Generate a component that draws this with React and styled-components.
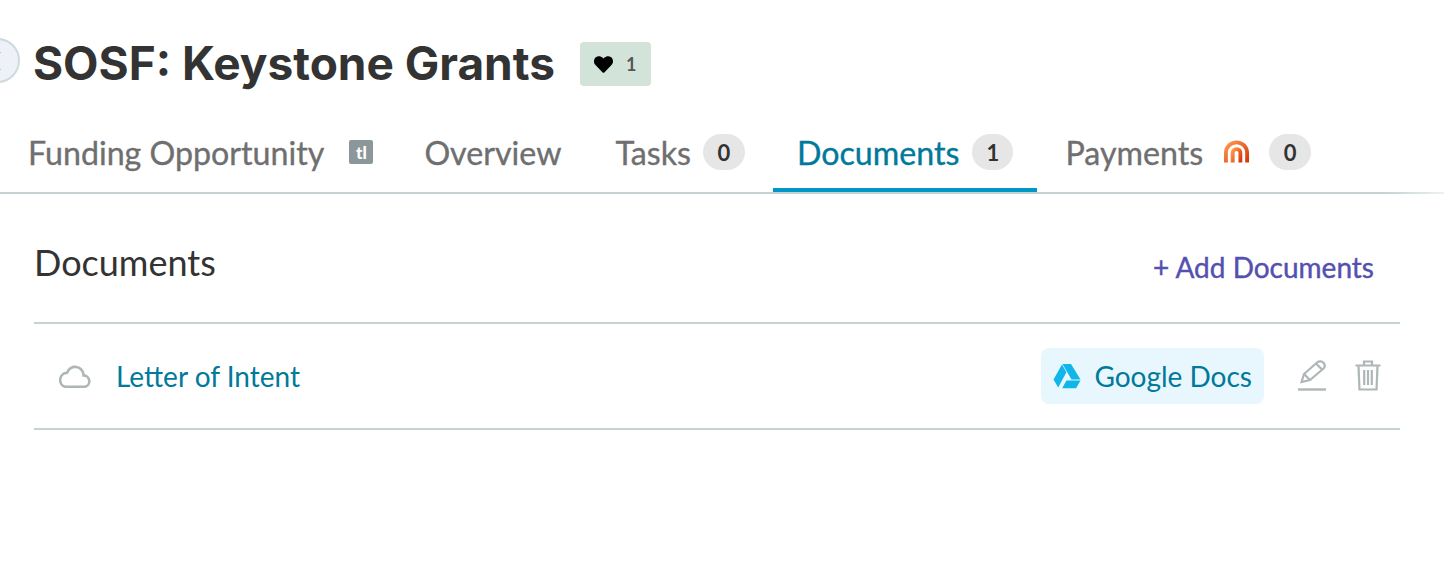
import React from "react";
import styled, { createGlobalStyle } from "styled-components";
import { FaHeart } from "react-icons/fa";

const GlobalStyle = createGlobalStyle`
  html, body {
    margin: 0;
    background: #fff;
    font-family: Lato, "Liberation Sans", sans-serif;
    overflow: hidden;
  }
`;

const Page = styled.div`
  position: relative;
  width: 1444px;
  height: 586px;
  overflow: hidden;
`;

const BackButton = styled.div`
  position: absolute;
  left: -25px;
  top: 38px;
  width: 45px;
  height: 45px;
  box-sizing: border-box;
  border: 2px solid #cddbde;
  border-radius: 50%;
  background: #eff1f8;
  display: flex;
  align-items: center;
  justify-content: flex-end;
  padding-right: 17px;
`;

const Header = styled.header`
  display: flex;
  align-items: center;
  gap: 25px;
  height: 128px;
  padding: 0 0 2px 33px;
  box-sizing: border-box;
`;

const Title = styled.h1`
  margin: 0;
  font-family: Inter, Lato, sans-serif;
  font-size: 46px;
  font-weight: 700;
  color: #333;
`;

const LikeBadge = styled.div`
  display: flex;
  align-items: center;
  gap: 13px;
  height: 44px;
  margin-top: 2px;
  padding: 0 15px 0 14px;
  border-radius: 4px;
  background: #d2e4d9;
  color: #555;
  font-size: 18px;
  font-weight: 700;
`;

const TabBar = styled.nav`
  display: flex;
  gap: 4px;
  height: 66px;
  padding-left: 4px;
  box-sizing: border-box;
  border-bottom: 2px solid;
  border-image: linear-gradient(90deg, #c6d3d5 96%, #eef1f2) 1;
`;

const Tab = styled.div`
  display: flex;
  align-items: center;
  height: 64px;
  margin-right: ${({ $after }) => $after || 0}px;
  padding: ${({ $active }) => ($active ? "4px" : "0")} 24px 16px 24px;
  box-sizing: border-box;
  font-size: 32.2px;
  -webkit-text-stroke: 0.35px currentColor;
  color: ${({ $active }) => ($active ? "#00799b" : "#6f6f6f")};
  border-bottom: ${({ $active }) => ($active ? "4px solid #0097c7" : "none")};
`;

const Count = styled.span`
  display: inline-flex;
  align-items: center;
  justify-content: center;
  width: ${({ $width }) => $width || 42}px;
  height: 36px;
  margin-left: ${({ $left }) => $left || 12}px;
  border-radius: 18px;
  background: #e6e6e6;
  color: #333;
  font-size: 22px;
  font-weight: 700;
  -webkit-text-stroke: 0;
`;

const TlIcon = styled.span`
  display: inline-flex;
  align-items: center;
  justify-content: center;
  width: 24px;
  height: 24px;
  margin-left: 25px;
  margin-right: -1px;
  border-radius: 2px;
  background: #8b979b;
  color: #fff;
  font-size: 17px;
  font-weight: 900;
  -webkit-text-stroke: 0;
`;

const Section = styled.section`
  padding: 0 44px 0 34px;
`;

const SectionHead = styled.div`
  display: flex;
  align-items: center;
  justify-content: space-between;
  height: 130px;
  padding: 0 26px 0 0;
  border-bottom: 2px solid #c6d3d5;
  box-sizing: border-box;
`;

const SectionTitle = styled.h2`
  margin: 8px 0 0;
  font-size: 36px;
  font-weight: 400;
  color: #333;
`;

const AddLink = styled.a`
  margin-top: 18px;
  font-size: 28px;
  -webkit-text-stroke: 0.4px currentColor;
  color: #5450b0;
`;

const Row = styled.div`
  display: flex;
  align-items: center;
  height: 106px;
  padding: 0 19px 0 24px;
  box-sizing: border-box;
  border-bottom: 2px solid #c6d3d5;
`;

const DocName = styled.a`
  flex: 1;
  margin-left: 24px;
  font-size: 28px;
  color: #00799b;
`;

const SourceChip = styled.div`
  display: flex;
  align-items: center;
  gap: 13px;
  height: 56px;
  padding: 0 12px;
  border-radius: 8px;
  background: #e8f7fe;
  font-size: 28px;
  color: #00799b;
`;

const ActionIcon = styled.svg`
  margin-left: ${({ $left }) => $left}px;
  fill: none;
  stroke: #aeb6b8;
  stroke-width: 2.2;
`;

const CloudIcon = () => (
  <svg width="34" height="25" viewBox="0 0 34 25" fill="none" stroke="#aeb6b8" strokeWidth="2.6">
    <path d="M7 22.800H27A5.800 5.800 0 0 0 25.600 11.400A8.500 8.500 0 0 0 9 8.800A7.200 7.200 0 0 0 7 22.800Z" />
  </svg>
);

const DriveIcon = () => (
  <svg width="28" height="26" viewBox="0 0 28 26" fill="#10b5ea">
    <path d="M9.500 1h8.500l9.500 15.500h-9z" />
    <path d="M9 1.500l4.400 7.700L5.200 24.500.5 16.500z" />
    <path d="M13.400 17.600h14.100l-4.400 7.600H9.200z" />
  </svg>
);

const ArchIcon = () => (
  <svg width="27" height="24" viewBox="0 0 28 24" fill="none" strokeWidth="4" style={{ margin: "0 7px 0 20px" }}>
    <defs>
      <linearGradient id="arch" x1="0" y1="0" x2="1" y2="1">
        <stop offset="0" stopColor="#ff9a4d" />
        <stop offset="1" stopColor="#d4370c" />
      </linearGradient>
    </defs>
    <path stroke="url(#arch)" d="M3 23V13a11 11 0 0 1 22 0v10" />
    <path stroke="url(#arch)" d="M10 23V13a4 4 0 0 1 8 0v10" />
  </svg>
);

const App = () => (
  <Page>
    <GlobalStyle />
    <BackButton>
      <svg width="10" height="20" viewBox="0 0 10 20" fill="none" stroke="#777" strokeWidth="1.800">
        <path d="M9 1L1 10l8 9" />
      </svg>
    </BackButton>
    <Header>
      <Title>SOSF: Keystone Grants</Title>
      <LikeBadge>
        <FaHeart size={19} color="#000" />
        1
      </LikeBadge>
    </Header>
    <TabBar>
      <Tab>
        Funding Opportunity
        <TlIcon>tl</TlIcon>
      </Tab>
      <Tab $after={2}>Overview</Tab>
      <Tab>
        Tasks
        <Count>0</Count>
      </Tab>
      <Tab $active>
        Documents
        <Count $left={13} $width={41}>1</Count>
      </Tab>
      <Tab>
        Payments
        <ArchIcon />
        <Count>0</Count>
      </Tab>
    </TabBar>
    <Section>
      <SectionHead>
        <SectionTitle>Documents</SectionTitle>
        <AddLink>+ Add Documents</AddLink>
      </SectionHead>
      <Row>
        <CloudIcon />
        <DocName>Letter of Intent</DocName>
        <SourceChip>
          <DriveIcon />
          Google Docs
        </SourceChip>
        <ActionIcon $left={34} width="28" height="32" viewBox="0 0 28 32">
          <path d="M3.500 22L6 14 19 2.500C21 .8 24 1 25.500 2.800S27 7 25.500 8.500L12 20z" />
          <path d="M6 14l6 6M18 3.500l6.500 6.500" />
          <path d="M0 29.500h28" strokeWidth="2.400" />
        </ActionIcon>
        <ActionIcon $left={29} width="26" height="32" viewBox="0 0 26 32">
          <path d="M.5 5.500h25M9 5V1.500h8V5M3.500 6l1 23.500h17l1-23.500" />
          <path d="M9.200 10v15M13 10v15M16.800 10v15" />
        </ActionIcon>
      </Row>
    </Section>
  </Page>
);

export default App;
